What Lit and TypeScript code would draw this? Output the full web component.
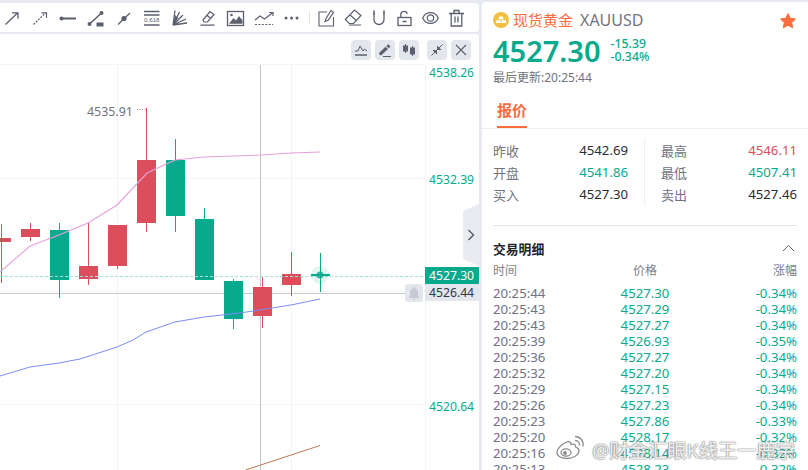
import { LitElement, html, css, svg } from "lit";
import { customElement } from "lit/decorators.js";

const G = "#09a98e";
const R = "#dc4e5b";
const I = "#5b5f6e";

type C = [number, number, number, number, number, string];
// x, wickTop, wickBottom, bodyTop, bodyBottom, color
const candles: C[] = [
  [1.5, 224, 283, 238, 242, R],
  [30.5, 223, 241, 229, 237, R],
  [59.5, 223, 298, 230, 280, G],
  [88.5, 223, 285, 266, 279, R],
  [117.5, 225, 269, 225, 266, R],
  [146.5, 108, 232, 160, 223, R],
  [175.5, 139, 232, 160, 216, G],
  [204.5, 208, 280, 219, 280, G],
  [233.5, 279, 329, 281, 319, G],
  [262.5, 276, 328, 287, 316, R],
  [291.5, 252, 296, 274, 285, R],
];

const rows: [string, string, string][] = [
  ["20:25:44", "4527.30", "-0.34%"],
  ["20:25:43", "4527.29", "-0.34%"],
  ["20:25:43", "4527.27", "-0.34%"],
  ["20:25:39", "4526.93", "-0.35%"],
  ["20:25:36", "4527.27", "-0.34%"],
  ["20:25:32", "4527.20", "-0.34%"],
  ["20:25:29", "4527.15", "-0.34%"],
  ["20:25:26", "4527.23", "-0.34%"],
  ["20:25:23", "4527.86", "-0.33%"],
  ["20:25:20", "4528.17", "-0.32%"],
  ["20:25:16", "4528.14", "-0.32%"],
  ["20:25:13", "4528.23", "-0.32%"],
];

const ic = (w: number, body: unknown) => html`<div class="slot"><svg class="ic" width=${w} height="20" viewBox="0 0 ${w} 20" fill="none" stroke=${I} stroke-width="1.2">${body}</svg></div>`;

const tools = [
  ic(20, svg`<path d="M3.500 17.500 15.500 6M10 5.800H16V11.800" stroke-width="1.300"/>`),
  ic(18, svg`<path d="M2.500 17.500 14.500 6" stroke-dasharray="2 1.200"/><path d="M10.500 5.800H15.500V10.800"/>`),
  ic(18, svg`<path d="M1 11.500H17" stroke-width="2"/><circle cx="2.500" cy="11.500" r="2" fill=${I} stroke="none"/>`),
  ic(18, svg`<path d="M2 17.500 15 5.500" stroke-width="1.600"/><circle cx="2.500" cy="17" r="2" fill=${I} stroke="none"/><circle cx="14.500" cy="6" r="2" fill=${I} stroke="none"/><rect x="9.500" y="15.500" width="7" height="4" fill=${I} stroke="none"/>`),
  ic(14, svg`<path d="M1 17.500 13 6" stroke-width="1.300"/><circle cx="7" cy="11.500" r="2.600" fill=${I} stroke="none"/>`),
  ic(18, svg`<path d="M1 4.500H16.500M1 8H16.500" stroke-width="1.600"/><path d="M1 18H16.500" stroke-width="1.600"/><text x="8.800" y="15.300" text-anchor="middle" font-size="6.200" fill=${I} stroke="none" font-family="Liberation Sans, sans-serif">0.618</text>`),
  ic(17, svg`<path d="M2 18 4 3.500M2 18 8.500 5M2 18 12 8M2 18 15 12M2 18 16 16" stroke-width="1.300"/><path d="M2 18 4 8 7 11 3 18Z" fill=${I} stroke="none"/>`),
  ic(17, svg`<path d="M4 13 11 4.500 15 7.500 8.500 15H5Z"/><path d="M7.800 8.200 12 11.500"/><path d="M1.500 18.200H15.500" stroke-width="1.300"/>`),
  ic(19, svg`<rect x="1.500" y="4.500" width="16" height="14" stroke-width="1.300"/><path d="M3 16.800 7.500 11 10 13.500 13 9 16.500 13.500V16.800Z" fill=${I} stroke="none"/><circle cx="5.500" cy="8" r="1.300" fill=${I} stroke="none"/>`),
  ic(20, svg`<path d="M1 13 6 9 10.500 12 19 5.500M15 5.500H19V9"/><path d="M1 17.500H19" stroke-dasharray="2 1.400"/>`),
  ic(15, svg`<circle cx="2" cy="11" r="1.500" fill=${I} stroke="none"/><circle cx="7.500" cy="11" r="1.500" fill=${I} stroke="none"/><circle cx="13" cy="11" r="1.500" fill=${I} stroke="none"/>`),
];
const tools2 = [
  ic(17, svg`<path d="M9 5H1V19H15.500V10" stroke-width="1.100"/><path d="M7 14.500 8 11.500 13 3.500 15.500 5.300 10.400 13Z"/>`),
  ic(18, svg`<path d="M1.300 12.500 10.500 3 17 8.500 9.500 16.500H5.300Z"/><path d="M6 8 12.500 13.500"/><path d="M5 18H17"/>`),
  ic(14, svg`<path d="M2 6V12.500A5 5 0 0 0 12 12.500V6" stroke-width="1.300"/><path d="M2 3.500V7.500M12 3.500V7.500" stroke-width="1.500"/>`),
  ic(15, svg`<rect x="1" y="10.500" width="13" height="8" stroke-width="1.300"/><path d="M3.800 10.500V7.500A3.300 3.300 0 0 1 10.300 6.800" stroke-width="1.300"/><path d="M5.500 14.500H9.500" stroke-width="1.400"/>`),
  ic(17, svg`<path d="M.7 11C4 3.800 13 3.800 16.300 11 13 18.200 4 18.200.7 11Z" stroke-width="1.200"/><circle cx="8.500" cy="11" r="3.200" stroke-width="1.200"/>`),
  ic(15, svg`<path d="M0 6.500H15M2.200 6.500V19H12.800V6.500M5 6V3.500H10V6M6 9.500V15.500M9 9.500V15.500" stroke-width="1.300"/>`),
];

@customElement("app-root")
export class AppRoot extends LitElement {
  static styles = css`
    :host { display: block; width: 808px; height: 470px; overflow: hidden; background: #e6e9ef; font-family: "Noto Sans", "Noto Sans CJK SC", sans-serif; position: relative; }
    .page { display: flex; gap: 3px; height: 470px; padding-top: 3px; box-sizing: border-box; }
    .left { width: 479px; display: flex; flex-direction: column; gap: 2px; flex: none; }
    .toolbar { height: 29px; background: #fff; border-radius: 0 4px 4px 0; display: flex; align-items: center; box-sizing: border-box; flex: none; overflow: hidden; }
    .ic { display: block; flex: none; }
    .slot { display: flex; justify-content: center; flex: none; }
    .tools { display: flex; align-items: center; margin-top: -1px; margin-left: -2.5px; }
    .tools .slot { width: 28px; }
    .sep { width: 1px; height: 13px; background: #e4e6ec; margin: 0 4px 0 3px; flex: none; }
    .tools2 { display: flex; align-items: center; margin-top: -1px; }
    .tools2 .slot { width: 26px; }
    .chart { position: relative; flex: 1; background: #fff; border-radius: 0 4px 0 0; overflow: hidden; }
    .chart > svg { position: absolute; left: 0; top: -34px; }
    .mode { position: absolute; top: 6px; right: 8px; display: flex; gap: 4px; }
    .btn { width: 20px; height: 20px; background: #e3e6ed; border-radius: 4px; display: flex; align-items: center; justify-content: center; }
    .btn.gap { margin-left: 4px; }
    .collapse { position: absolute; left: 463px; top: 170px; width: 16px; height: 62px; background: #e9ebf0; clip-path: polygon(0 7px, 100% 0, 100% 100%, 0 55px); display: flex; align-items: center; justify-content: center; }
    .ptag { position: absolute; left: 425px; width: 54px; box-sizing: border-box; padding-left: 4px; font: 12.2px/17px "Noto Sans", sans-serif; }
    .ptag.cur { top: 233px; height: 17px; background: #09a98e; color: #fff; }
    .ptag.line { top: 250px; height: 17px; background: #e3e6ed; color: #333644; }
    .bell { position: absolute; left: 405px; top: 250px; width: 18px; height: 18px; background: #e3e6ed; border-radius: 3px; display: flex; align-items: center; justify-content: center; }
    .ax { position: absolute; left: 429px; font: 12.2px/16px "Noto Sans", sans-serif; color: #09a98e; }
    .high { position: absolute; left: 87px; top: 70px; font: 12.4px/16px "Noto Sans", sans-serif; color: #6f7280; }

    .right { flex: 1; background: #fff; border-radius: 4px 0 0 0; padding: 8px 11px 0 11px; display: flex; flex-direction: column; position: relative; overflow: hidden; margin-top: -1px; }
    .title { display: flex; align-items: center; height: 19px; gap: 4px; font-size: 15px; color: #fa6d3c; }
    .coin { width: 16px; height: 16px; flex: none; }
    .sym { color: #72747f; font-size: 16px; margin-left: 3px; }
    .star { position: absolute; right: 12px; top: 11px; }
    .price { display: flex; align-items: center; gap: 10px; height: 34px; margin-top: 5px; }
    .big { font-size: 29px; font-weight: 600; color: #09a98e; line-height: 34px; }
    .chg { font-size: 12.3px; font-weight: 500; color: #09a98e; line-height: 13px; margin-top: -2px; }
    .upd { font-size: 12px; color: #6f7280; line-height: 17px; margin-top: 1px; }
    .tabs { margin: 9px -11px 0 -11px; padding-left: 15px; height: 33px; border-bottom: 1px solid #eceef2; flex: none; }
    .tab { display: inline-block; height: 33px; box-sizing: border-box; padding-top: 5px; font-size: 15px; font-weight: 700; color: #fa6d3c; border-bottom: 2px solid #fa6d3c; line-height: 20px; width: 30px; white-space: nowrap; }
    .stats { display: grid; grid-template-columns: 152px 1fr; margin-top: 10px; height: 66px; flex: none; }
    .col { display: grid; grid-auto-rows: 22px; font-size: 13.2px; color: #2a2c36; }
    .col.a { border-right: 1px solid #eef0f3; padding-right: 16px; }
    .col.b { padding-left: 16px; }
    .st { display: flex; justify-content: space-between; align-items: center; white-space: nowrap; }
    .st span:first-child { color: #6f7280; font-size: 13px; }
    .st .g { color: #09a98e; }
    .st .r { color: #dc4e5b; }
    .hr { height: 1px; background: #e4e6ed; margin-top: 20px; flex: none; }
    .dh { display: flex; justify-content: space-between; align-items: center; height: 20px; margin-top: 12px; font-size: 12.8px; font-weight: 600; color: #22242c; flex: none; }
    .dh svg { margin-right: 2px; }
    .thead { display: grid; grid-template-columns: 1fr 1fr 1fr; font-size: 12px; color: #7b7e8a; line-height: 16px; margin-top: 5px; flex: none; }
    .tb { display: grid; grid-template-columns: 1fr 1fr 1fr; font-size: 13.2px; line-height: 16px; color: #09a98e; white-space: nowrap; }
    .thead > :nth-child(2), .tb > :nth-child(2) { text-align: center; }
    .thead > :nth-child(3), .tb > :nth-child(3) { text-align: right; }
    .tb > :first-child { color: #6f7280; }
    .rows { margin-top: 6px; flex: none; }
    .wm { position: absolute; left: 556px; top: 435px; height: 25px; display: flex; align-items: center; gap: 6px; color: rgba(255,255,255,.88); font-size: 19.3px; font-weight: 500; text-shadow: 0 0 1.5px rgba(90,90,90,.85), 0 0 1px rgba(90,90,90,.7); white-space: nowrap; pointer-events: none; }
    .wm span { margin-top: 5px; }
  `;

  render() {
    const grid = [64, 178, 291, 404];
    const vgrid = [117, 291, 425];
    return html`<div class="page">
      <div class="left">
        <div class="toolbar">
          <div class="tools">${tools}</div>
          <div class="sep"></div>
          <div class="tools2">${tools2}</div>
        </div>
        <div class="chart">
          <svg width="479" height="470" viewBox="0 0 479 470">
            ${grid.map((y) => svg`<line x1="0" x2="425" y1=${y + 0.5} y2=${y + 0.5} stroke="#f3f4f6"/>`)}
            ${vgrid.map((x) => svg`<line x1=${x + 0.5} x2=${x + 0.5} y1="65" y2="470" stroke="#f3f4f6"/>`)}
            <line x1="260.5" x2="260.5" y1="65" y2="470" stroke="#c3c4cc"/>
            <line x1="0" x2="405" y1="293.5" y2="293.5" stroke="#c8c9cf"/>
            ${candles.map(([x, a, b, t, bb, c]) => svg`<line x1=${x} x2=${x} y1=${a} y2=${b} stroke=${c} />
              <rect x=${Math.max(0, x - 9.5)} y=${t} width=${x < 10 ? 11 : 19} height=${bb - t} fill=${c} />`)}
            <polyline points="0,272 30,246 59,235 88,223 117,205 147,173 175,160 204,157 233,156 262,155 291,153 320,152" fill="none" stroke="#e6a0dc" stroke-width="1.1"/>
            <polyline points="0,376 30,367 59,363 80,359 117,347 133,340 146,332 175,322 204,317 240,313 291,305 320,299" fill="none" stroke="#7b8cf5" stroke-width="1"/>
            <polyline points="245.5,470 320,445.500" fill="none" stroke="#b87850" stroke-width="1"/>
            <line x1="0" x2="425" y1="276.5" y2="276.5" stroke="#9fe6d8" stroke-dasharray="3 2"/>
            <circle cx="320" cy="275" r="9" fill=${G} opacity=".12"/>
            <circle cx="320" cy="275" r="3.5" fill=${G} opacity=".8"/>
            <line x1="320.5" x2="320.5" y1="253" y2="292" stroke=${G}/>
            <rect x="311" y="274" width="19" height="2" fill=${G}/>
            <path d="M137 109.5H146" stroke="#9a9ca6" stroke-dasharray="1 1.5"/>
          </svg>
          <div class="high">4535.91</div>
          <div class="ax" style="top:31px">4538.26</div>
          <div class="ax" style="top:138px">4532.39</div>
          <div class="ax" style="top:365px">4520.64</div>
          <div class="mode">
            <div class="btn"><svg width="14" height="14" viewBox="0 0 14 14" fill="none" stroke=${I}><path d="M1 8 4 8 6 3 9 8 10.5 6 13 8"/><path d="M1 12H13" stroke-width="1.3"/></svg></div>
            <div class="btn"><svg width="14" height="14" viewBox="0 0 14 14" fill=${I}><path d="M1 11 3 12.5 10 6 7.5 3.8 1.5 9.5ZM8.3 3 10.8 5.3 12.5 3.6 10.2 1.2ZM5 13H13V14H5Z"/></svg></div>
            <div class="btn"><svg width="14" height="14" viewBox="0 0 14 14" fill=${I} stroke=${I}><path d="M3.5 1V10M10.5 3V13"/><rect x="1.5" y="3" width="4" height="5"/><rect x="8.5" y="5" width="4" height="6"/></svg></div>
            <div class="btn gap"><svg width="14" height="14" viewBox="0 0 14 14" fill="none" stroke=${I}><path d="M1.5 12.5 6 8M12.5 1.5 8 6"/><path d="M2.5 7H7V11.5ZM11.5 7H7V2.5Z" fill=${I} stroke="none"/></svg></div>
            <div class="btn"><svg width="14" height="14" viewBox="0 0 14 14" fill="none" stroke=${I} stroke-width="1.1"><path d="M2 2 12 12M12 2 2 12"/></svg></div>
          </div>
          <div class="collapse"><svg width="8" height="12" viewBox="0 0 8 12" fill="none" stroke="#5b5f6e" stroke-width="1.5"><path d="M1.5 1 6.5 6 1.5 11"/></svg></div>
          <div class="bell"><svg width="12" height="13" viewBox="0 0 12 13" fill="#c8cad3"><path d="M6 0a1 1 0 0 1 1 1v.6C9 2 10 3.600 10 6v3l1.500 1.500V11H.5v-.5L2 9V6c0-2.400 1-4 3-4.400V1a1 1 0 0 1 1-1ZM4.500 11.500h3a1.500 1.500 0 0 1-3 0Z"/></svg></div>
          <div class="ptag cur">4527.30</div>
          <div class="ptag line">4526.44</div>
        </div>
      </div>
      <div class="right">
        <div class="title">
          <svg class="coin" viewBox="0 0 16 16"><circle cx="8" cy="8" r="8" fill="#f2c144"/><path d="M6.200 4.500H9.800L10.500 7.400H5.500ZM3.200 8.200H7.500L7.800 11H2.700ZM8.500 8.200H12.800L13.300 11H8.200Z" fill="#fff"/></svg>
          <span>现货黄金</span><span class="sym">XAUUSD</span>
        </div>
        <svg class="star" width="16" height="16" viewBox="0 0 16 16"><path d="M8 .6 10.300 5.300 15.500 6 11.700 9.600 12.700 14.800 8 12.300 3.300 14.800 4.300 9.600.5 6 5.700 5.300Z" fill="#fa6d3c" stroke="#fa6d3c" stroke-linejoin="round"/></svg>
        <div class="price"><div class="big">4527.30</div><div class="chg">-15.39<br>-0.34%</div></div>
        <div class="upd">最后更新:20:25:44</div>
        <div class="tabs"><span class="tab">报价</span></div>
        <div class="stats">
          <div class="col a">
            <div class="st"><span>昨收</span><span>4542.69</span></div>
            <div class="st"><span>开盘</span><span class="g">4541.86</span></div>
            <div class="st"><span>买入</span><span>4527.30</span></div>
          </div>
          <div class="col b">
            <div class="st"><span>最高</span><span class="r">4546.11</span></div>
            <div class="st"><span>最低</span><span class="g">4507.41</span></div>
            <div class="st"><span>卖出</span><span>4527.46</span></div>
          </div>
        </div>
        <div class="hr"></div>
        <div class="dh"><span>交易明细</span><svg width="13" height="8" viewBox="0 0 13 8" fill="none" stroke="#5b5f6e"><path d="M1 7 6.500 1.500 12 7"/></svg></div>
        <div class="thead"><span>时间</span><span>价格</span><span>涨幅</span></div>
        <div class="rows">${rows.map((r) => html`<div class="tb"><span>${r[0]}</span><span>${r[1]}</span><span>${r[2]}</span></div>`)}</div>
      </div>
    </div>
    <div class="wm"><svg width="30" height="25" viewBox="0 0 30 24" fill="none" stroke="#8c8c8c" stroke-width="1.300"><path d="M12 6C6 8 1 13 1 17c0 4 5 6 10 6 6 0 12-3.500 12-8 0-2.500-2.500-3-3.500-3.500C20 9 18 8 15 9c0 0 .5-3-3-3Z" fill="#fff"/><ellipse cx="10" cy="17" rx="5" ry="3.600"/><circle cx="9" cy="17.500" r="1.300" fill="#8c8c8c"/><path d="M19 1c5 0 9 4 8 10M19 5c3 0 5 2 4.500 5"/></svg><span>@财金汇眼K线王一鹿宗</span></div>`;
  }
}
